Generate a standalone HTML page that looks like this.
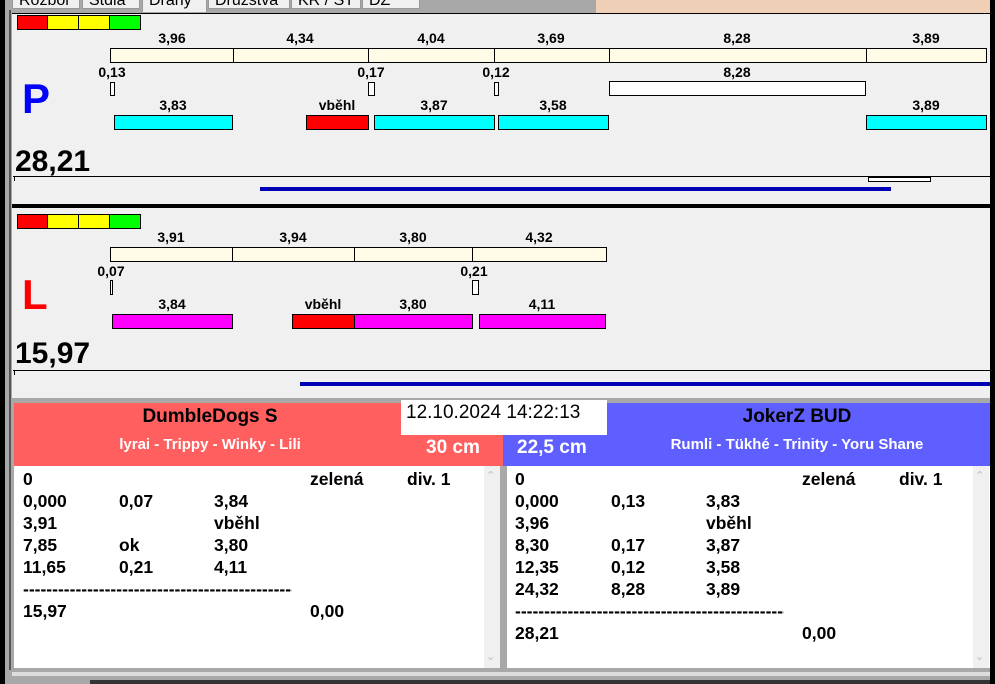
<!DOCTYPE html>
<html><head><meta charset="utf-8">
<style>
*{margin:0;padding:0;box-sizing:border-box}
body{width:995px;height:684px;position:relative;overflow:hidden;background:#a8a8a8;font-family:"Liberation Sans",Arial,sans-serif;font-weight:bold;color:#000}
.a{position:absolute}
.t{position:absolute;font-size:14px;font-weight:bold;transform:translateX(-50%);white-space:nowrap;line-height:14px}
.b{position:absolute;border:1px solid #000}
.tab{position:absolute;top:-8px;height:17px;background:#f0f0f0;border:1px solid #999;font-size:16px;font-weight:normal;padding:0 6px;overflow:hidden;line-height:15px}
.row{position:absolute;font-size:17.5px;line-height:22px;white-space:nowrap}
.row span{position:absolute}
</style></head><body>
<div class="a" style="left:0;top:0;width:5px;height:684px;background:#000"></div>
<div class="a" style="left:9px;top:10px;width:2px;height:660px;background:#555"></div>
<div class="a" style="left:990px;top:0;width:5px;height:684px;background:#000"></div>
<div class="a" style="left:12px;top:0;width:978px;height:13px;background:#a8a8a8"></div>
<div class="tab" style="left:12px;width:68px">Rozbor</div>
<div class="tab" style="left:82px;width:58px">Stdla</div>
<div class="tab" style="left:142px;width:65px;height:20px;border-bottom:none">Dráhy</div>
<div class="tab" style="left:208px;width:82px">Družstva</div>
<div class="tab" style="left:291px;width:70px">KR / ST</div>
<div class="tab" style="left:362px;width:58px">DZ</div>
<div class="a" style="left:596px;top:0;width:394px;height:13px;background:#efd0b6"></div>
<div class="a" style="left:12px;top:13px;width:978px;height:191px;background:#f0f0f0;border-top:1px solid #000"></div>
<div class="a" style="left:12px;top:204px;width:978px;height:4px;background:#000"></div>
<div class="a" style="left:12px;top:208px;width:978px;height:190px;background:#f0f0f0"></div>

<div class="b" style="left:17px;top:15px;width:31px;height:15px;background:#f00"></div>
<div class="b" style="left:47px;top:15px;width:32px;height:15px;background:#ff0"></div>
<div class="b" style="left:78px;top:15px;width:32px;height:15px;background:#ff0"></div>
<div class="b" style="left:109px;top:15px;width:32px;height:15px;background:#0f0"></div>

<div class="t" style="left:172px;top:31px">3,96</div>
<div class="t" style="left:300px;top:31px">4,34</div>
<div class="t" style="left:431px;top:31px">4,04</div>
<div class="t" style="left:551px;top:31px">3,69</div>
<div class="t" style="left:737px;top:31px">8,28</div>
<div class="t" style="left:926px;top:31px">3,89</div>
<div class="b" style="left:110px;top:48px;width:124px;height:15px;background:#fffbe6"></div>
<div class="b" style="left:233px;top:48px;width:136px;height:15px;background:#fffbe6"></div>
<div class="b" style="left:368px;top:48px;width:127px;height:15px;background:#fffbe6"></div>
<div class="b" style="left:494px;top:48px;width:116px;height:15px;background:#fffbe6"></div>
<div class="b" style="left:609px;top:48px;width:258px;height:15px;background:#fffbe6"></div>
<div class="b" style="left:866px;top:48px;width:121px;height:15px;background:#fffbe6"></div>

<div class="t" style="left:112px;top:65px">0,13</div>
<div class="t" style="left:371px;top:65px">0,17</div>
<div class="t" style="left:496px;top:65px">0,12</div>
<div class="t" style="left:737px;top:65px">8,28</div>
<div class="b" style="left:110px;top:82px;width:5px;height:14px;background:#fff"></div>
<div class="b" style="left:368px;top:82px;width:7px;height:14px;background:#fff"></div>
<div class="b" style="left:494px;top:82px;width:5px;height:14px;background:#fff"></div>
<div class="b" style="left:609px;top:81px;width:257px;height:15px;background:#fff"></div>

<div class="t" style="left:173px;top:98px">3,83</div>
<div class="t" style="left:337px;top:98px">vběhl</div>
<div class="t" style="left:434px;top:98px">3,87</div>
<div class="t" style="left:553px;top:98px">3,58</div>
<div class="t" style="left:926px;top:98px">3,89</div>
<div class="b" style="left:114px;top:115px;width:119px;height:15px;background:#0ff"></div>
<div class="b" style="left:306px;top:115px;width:63px;height:15px;background:#f00"></div>
<div class="b" style="left:374px;top:115px;width:121px;height:15px;background:#0ff"></div>
<div class="b" style="left:498px;top:115px;width:111px;height:15px;background:#0ff"></div>
<div class="b" style="left:866px;top:115px;width:121px;height:15px;background:#0ff"></div>

<div class="a" style="left:22px;top:76px;font-size:42px;color:#0000ff;line-height:46px">P</div>
<div class="a" style="left:15px;top:145px;font-size:30px;line-height:34px">28,21</div>
<div class="a" style="left:13px;top:176px;width:977px;height:1px;background:#000"></div>
<div class="a" style="left:14px;top:177px;width:1px;height:4px;background:#000"></div>
<div class="b" style="left:868px;top:177px;width:63px;height:5px;background:#fff"></div>
<div class="a" style="left:260px;top:187px;width:631px;height:4px;background:#0000b4"></div>

<div class="b" style="left:17px;top:214px;width:31px;height:15px;background:#f00"></div>
<div class="b" style="left:47px;top:214px;width:32px;height:15px;background:#ff0"></div>
<div class="b" style="left:78px;top:214px;width:32px;height:15px;background:#ff0"></div>
<div class="b" style="left:109px;top:214px;width:32px;height:15px;background:#0f0"></div>

<div class="t" style="left:171px;top:230px">3,91</div>
<div class="t" style="left:293px;top:230px">3,94</div>
<div class="t" style="left:413px;top:230px">3,80</div>
<div class="t" style="left:539px;top:230px">4,32</div>
<div class="b" style="left:110px;top:247px;width:123px;height:15px;background:#fffbe6"></div>
<div class="b" style="left:232px;top:247px;width:123px;height:15px;background:#fffbe6"></div>
<div class="b" style="left:354px;top:247px;width:119px;height:15px;background:#fffbe6"></div>
<div class="b" style="left:472px;top:247px;width:135px;height:15px;background:#fffbe6"></div>

<div class="t" style="left:111px;top:264px">0,07</div>
<div class="t" style="left:474px;top:264px">0,21</div>
<div class="b" style="left:110px;top:280px;width:3px;height:15px;background:#fff"></div>
<div class="b" style="left:472px;top:280px;width:7px;height:15px;background:#fff"></div>

<div class="t" style="left:172px;top:297px">3,84</div>
<div class="t" style="left:323px;top:297px">vběhl</div>
<div class="t" style="left:413px;top:297px">3,80</div>
<div class="t" style="left:542px;top:297px">4,11</div>
<div class="b" style="left:112px;top:314px;width:121px;height:15px;background:#f0f"></div>
<div class="b" style="left:292px;top:314px;width:63px;height:15px;background:#f00"></div>
<div class="b" style="left:354px;top:314px;width:119px;height:15px;background:#f0f"></div>
<div class="b" style="left:479px;top:314px;width:127px;height:15px;background:#f0f"></div>

<div class="a" style="left:22px;top:272px;font-size:42px;color:#f00;line-height:46px">L</div>
<div class="a" style="left:15px;top:337px;font-size:30px;line-height:34px">15,97</div>
<div class="a" style="left:13px;top:370px;width:977px;height:1px;background:#000"></div>
<div class="a" style="left:14px;top:371px;width:1px;height:4px;background:#000"></div>
<div class="a" style="left:300px;top:382px;width:690px;height:4px;background:#0000b4"></div>

<div class="a" style="left:12px;top:398px;width:978px;height:286px;background:#a8a8a8"></div>
<div class="a" style="left:14px;top:403px;width:489px;height:63px;background:#ff5f5f"></div>
<div class="a" style="left:503px;top:403px;width:487px;height:63px;background:#5f5fff"></div>
<div class="a" style="left:14px;top:406px;width:392px;text-align:center;font-size:19px;line-height:22px">DumbleDogs S</div>
<div class="a" style="left:14px;top:436px;width:392px;text-align:center;font-size:15px;color:#fff;line-height:18px">lyrai - Trippy - Winky - Lili</div>
<div class="a" style="left:426px;top:437px;font-size:19px;color:#fff;line-height:22px">30 cm</div>
<div class="a" style="left:517px;top:437px;font-size:19px;color:#fff;line-height:22px">22,5 cm</div>
<div class="a" style="left:607px;top:406px;width:380px;text-align:center;font-size:19px;line-height:22px">JokerZ BUD</div>
<div class="a" style="left:607px;top:436px;width:380px;text-align:center;font-size:15px;color:#fff;line-height:18px">Rumli - Tükhé - Trinity - Yoru Shane</div>
<div class="a" style="left:401px;top:400px;width:206px;height:35px;background:#fff;font-size:19px;font-weight:normal;padding:2px 0 0 5px;line-height:22px">12.10.2024 14:22:13</div>

<div class="a" style="left:14px;top:466px;width:486px;height:202px;background:#fff"></div>
<div class="a" style="left:484px;top:466px;width:16px;height:202px;background:#f0f0f0"></div>
<div class="a" style="left:507px;top:466px;width:483px;height:202px;background:#fff"></div>
<div class="a" style="left:973px;top:466px;width:16px;height:202px;background:#f0f0f0"></div>
<div class="a" style="left:486px;top:469px;font-size:11px;color:#bbb;font-weight:normal">&#8963;</div>
<div class="a" style="left:486px;top:650px;font-size:11px;color:#bbb;font-weight:normal">&#8964;</div>
<div class="a" style="left:975px;top:469px;font-size:11px;color:#bbb;font-weight:normal">&#8963;</div>
<div class="a" style="left:975px;top:650px;font-size:11px;color:#bbb;font-weight:normal">&#8964;</div>
<div class="a" style="left:12px;top:672px;width:978px;height:4px;background:#ddd"></div>
<div class="a" style="left:90px;top:680px;width:900px;height:4px;background:#333"></div>

<div class="row" style="left:23px;top:468px;width:470px">
<div style="position:relative;height:22px"><span style="left:0">0</span><span style="left:287px">zelená</span><span style="left:384px">div. 1</span></div>
<div style="position:relative;height:22px"><span style="left:0">0,000</span><span style="left:96px">0,07</span><span style="left:191px">3,84</span></div>
<div style="position:relative;height:22px"><span style="left:0">3,91</span><span style="left:191px">vběhl</span></div>
<div style="position:relative;height:22px"><span style="left:0">7,85</span><span style="left:96px">ok</span><span style="left:191px">3,80</span></div>
<div style="position:relative;height:22px"><span style="left:0">11,65</span><span style="left:96px">0,21</span><span style="left:191px">4,11</span></div>
<div style="position:relative;height:22px"><span style="left:0;width:269px;overflow:hidden">-------------------------------------------------</span></div>
<div style="position:relative;height:22px"><span style="left:0">15,97</span><span style="left:287px">0,00</span></div>
</div>
<div class="row" style="left:515px;top:468px;width:460px">
<div style="position:relative;height:22px"><span style="left:0">0</span><span style="left:287px">zelená</span><span style="left:384px">div. 1</span></div>
<div style="position:relative;height:22px"><span style="left:0">0,000</span><span style="left:96px">0,13</span><span style="left:191px">3,83</span></div>
<div style="position:relative;height:22px"><span style="left:0">3,96</span><span style="left:191px">vběhl</span></div>
<div style="position:relative;height:22px"><span style="left:0">8,30</span><span style="left:96px">0,17</span><span style="left:191px">3,87</span></div>
<div style="position:relative;height:22px"><span style="left:0">12,35</span><span style="left:96px">0,12</span><span style="left:191px">3,58</span></div>
<div style="position:relative;height:22px"><span style="left:0">24,32</span><span style="left:96px">8,28</span><span style="left:191px">3,89</span></div>
<div style="position:relative;height:22px"><span style="left:0;width:269px;overflow:hidden">-------------------------------------------------</span></div>
<div style="position:relative;height:22px"><span style="left:0">28,21</span><span style="left:287px">0,00</span></div>
</div>
</body></html>
